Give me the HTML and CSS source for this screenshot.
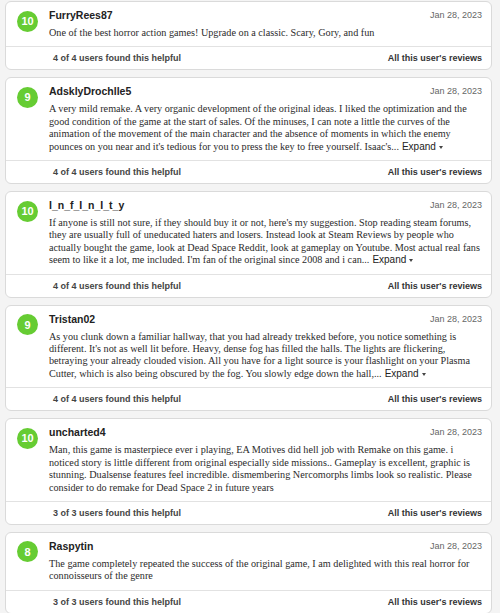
FILE: index.html
```html
<!DOCTYPE html>
<html lang="en">
<head>
  <meta charset="UTF-8" />
  <meta name="viewport" content="width=device-width, initial-scale=1.0" />
  <title>User Reviews</title>
  <link rel="stylesheet" href="styles.css">
</head>
<body>
  <div class="reviews">

    <div class="review">
      <div class="review-body">
        <div class="score">10</div>
        <div class="review-content">
          <div class="review-head">
            <span class="author">FurryRees87</span>
            <span class="date">Jan 28, 2023</span>
          </div>
          <p class="review-text">One of the best horror action games! Upgrade on a classic. Scary, Gory, and fun</p>
        </div>
      </div>
      <div class="review-foot">
        <span>4 of 4 users found this helpful</span>
        <a href="#">All this user's reviews</a>
      </div>
    </div>

    <div class="review">
      <div class="review-body">
        <div class="score">9</div>
        <div class="review-content">
          <div class="review-head">
            <span class="author">AdsklyDrochlle5</span>
            <span class="date">Jan 28, 2023</span>
          </div>
          <p class="review-text">A very mild remake. A very organic development of the original ideas. I liked the optimization and the good condition of the game at the start of sales. Of the minuses, I can note a little the curves of the animation of the movement of the main character and the absence of moments in which the enemy pounces on you near and it's tedious for you to press the key to free yourself. Isaac's...<a href="#" class="expand">Expand</a><span class="caret"></span></p>
        </div>
      </div>
      <div class="review-foot">
        <span>4 of 4 users found this helpful</span>
        <a href="#">All this user's reviews</a>
      </div>
    </div>

    <div class="review">
      <div class="review-body">
        <div class="score">10</div>
        <div class="review-content">
          <div class="review-head">
            <span class="author">I_n_f_I_n_I_t_y</span>
            <span class="date">Jan 28, 2023</span>
          </div>
          <p class="review-text">If anyone is still not sure, if they should buy it or not, here's my suggestion. Stop reading steam forums, they are usually full of uneducated haters and losers. Instead look at Steam Reviews by people who actually bought the game, look at Dead Space Reddit, look at gameplay on Youtube. Most actual real fans seem to like it a lot, me included. I'm fan of the original since 2008 and i can...<a href="#" class="expand">Expand</a><span class="caret"></span></p>
        </div>
      </div>
      <div class="review-foot">
        <span>4 of 4 users found this helpful</span>
        <a href="#">All this user's reviews</a>
      </div>
    </div>

    <div class="review">
      <div class="review-body">
        <div class="score">9</div>
        <div class="review-content">
          <div class="review-head">
            <span class="author">Tristan02</span>
            <span class="date">Jan 28, 2023</span>
          </div>
          <p class="review-text">As you clunk down a familiar hallway, that you had already trekked before, you notice something is different. It's not as well lit before. Heavy, dense fog has filled the halls. The lights are flickering, betraying your already clouded vision. All you have for a light source is your flashlight on your Plasma Cutter, which is also being obscured by the fog. You slowly edge down the hall,...<a href="#" class="expand">Expand</a><span class="caret"></span></p>
        </div>
      </div>
      <div class="review-foot">
        <span>4 of 4 users found this helpful</span>
        <a href="#">All this user's reviews</a>
      </div>
    </div>

    <div class="review">
      <div class="review-body">
        <div class="score">10</div>
        <div class="review-content">
          <div class="review-head">
            <span class="author">uncharted4</span>
            <span class="date">Jan 28, 2023</span>
          </div>
          <p class="review-text">Man, this game is masterpiece ever i playing, EA Motives did hell job with Remake on this game. i noticed story is little different from original especially side missions.. Gameplay is excellent, graphic is stunning. Dualsense features feel incredible. dismembering Nercomorphs limbs look so realistic. Please consider to do remake for Dead Space 2 in future years</p>
        </div>
      </div>
      <div class="review-foot">
        <span>3 of 3 users found this helpful</span>
        <a href="#">All this user's reviews</a>
      </div>
    </div>

    <div class="review">
      <div class="review-body">
        <div class="score">8</div>
        <div class="review-content">
          <div class="review-head">
            <span class="author">Raspytin</span>
            <span class="date">Jan 28, 2023</span>
          </div>
          <p class="review-text">The game completely repeated the success of the original game, I am delighted with this real horror for connoisseurs of the genre</p>
        </div>
      </div>
      <div class="review-foot">
        <span>3 of 3 users found this helpful</span>
        <a href="#">All this user's reviews</a>
      </div>
    </div>

  </div>
</body>
</html>
```

FILE: styles.css
```css
body {
  font-family: 'Liberation Sans', Arial, sans-serif;
  margin: 0;
  padding: 0;
  background-color: #f4f4f4;
  color: #222;
}

.reviews {
  display: flex;
  flex-direction: column;
  gap: 7px;
  padding: 1px 8px 0 5px;
}

.review {
  background-color: white;
  border: 1px solid #dadada;
  border-radius: 6px;
}

.review-body {
  display: flex;
  padding: 7px 9px 7px 11px;
}

.score {
  flex-shrink: 0;
  width: 21px;
  height: 21px;
  margin-top: 1.5px;
  margin-right: 11px;
  border-radius: 50%;
  background-color: #66cc33;
  color: white;
  font-size: 11px;
  font-weight: bold;
  display: flex;
  align-items: center;
  justify-content: center;
}

.review-content {
  flex: 1;
  min-width: 0;
}

.review-head {
  display: flex;
  justify-content: space-between;
  align-items: center;
  height: 12px;
  margin-bottom: 6px;
}

.author {
  font-size: 10.5px;
  font-weight: bold;
  color: #222;
}

.date {
  font-size: 9px;
  color: #666;
}

.review-text {
  margin: 0;
  font-family: 'Liberation Serif', 'Times New Roman', serif;
  font-size: 10.2px;
  line-height: 12.4px;
  color: #2b2b2b;
}

.expand {
  margin-left: 3px;
  font-family: 'Liberation Sans', Arial, sans-serif;
  font-size: 10px;
  line-height: 12.4px;
  color: #222;
  text-decoration: none;
}

.caret {
  display: inline-block;
  margin-left: 3px;
  vertical-align: 1px;
  border-left: 2.5px solid transparent;
  border-right: 2.5px solid transparent;
  border-top: 3px solid #444;
}

.review-foot {
  display: flex;
  justify-content: space-between;
  align-items: center;
  height: 22px;
  padding: 0 9px 0 47px;
  border-top: 1px solid #e2e2e2;
  font-size: 9px;
  font-weight: bold;
  color: #444;
}

.review-foot a {
  color: #333;
  text-decoration: none;
}
```
